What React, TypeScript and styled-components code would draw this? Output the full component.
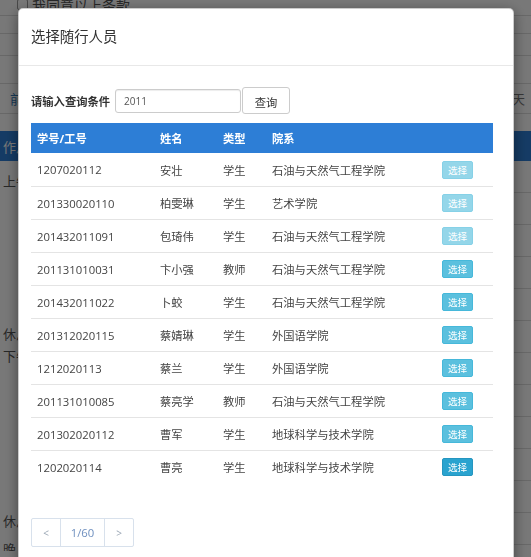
import React from 'react';
import styled, { createGlobalStyle, css } from 'styled-components';

const GlobalStyle = createGlobalStyle`
  html, body {
    margin: 0;
    padding: 0;
    background: #fff;
    overflow: hidden;
  }
  body {
    font-family: "Open Sans", "Noto Sans CJK SC", sans-serif;
    color: #333;
  }
`;

type Person = {
  id: string;
  name: string;
  kind: string;
  dept: string;
  state: 'faded' | 'normal' | 'active';
};

const people: Person[] = [
  { id: '1207020112', name: '安壮', kind: '学生', dept: '石油与天然气工程学院', state: 'faded' },
  { id: '201330020110', name: '柏雯琳', kind: '学生', dept: '艺术学院', state: 'faded' },
  { id: '201432011091', name: '包琦伟', kind: '学生', dept: '石油与天然气工程学院', state: 'faded' },
  { id: '201131010031', name: '卞小强', kind: '教师', dept: '石油与天然气工程学院', state: 'normal' },
  { id: '201432011022', name: '卜蛟', kind: '学生', dept: '石油与天然气工程学院', state: 'normal' },
  { id: '201312020115', name: '蔡婧琳', kind: '学生', dept: '外国语学院', state: 'normal' },
  { id: '1212020113', name: '蔡兰', kind: '学生', dept: '外国语学院', state: 'normal' },
  { id: '201131010085', name: '蔡亮学', kind: '教师', dept: '石油与天然气工程学院', state: 'normal' },
  { id: '201302020112', name: '曹军', kind: '学生', dept: '地球科学与技术学院', state: 'normal' },
  { id: '1202020114', name: '曹亮', kind: '学生', dept: '地球科学与技术学院', state: 'active' },
];

// left column of the schedule behind the dialog (rowspan blocks)
const periods = [
  { label: '上午', h: 160, pt: 11 },
  { label: '休息', h: 18, pt: 4 },
  { label: '下午', h: 164, pt: 8 },
  { label: '休息', h: 28, pt: 9 },
  { label: '晚上', h: 60, pt: 9 },
];

/* ---------- page behind the dialog ---------- */

const Page = styled.div`
  width: 531px;
  height: 557px;
  font-size: 14px;
  color: #555;
`;

const AgreeRow = styled.div`
  height: 21px;
  margin-top: -6px;
  display: flex;
  align-items: center;
  gap: 4px;
  padding-left: 17px;
  border-bottom: 1px solid #ddd;
  font-size: 14px;
`;

const Box = styled.span`
  width: 9px;
  height: 9px;
  border: 1px solid #999;
  border-radius: 2px;
`;

const FormLine = styled.div<{ $h: number }>`
  height: ${(p) => p.$h}px;
  border-bottom: 1px solid #ddd;
`;

const DayNav = styled.div`
  height: 29px;
  margin-bottom: 17px;
  display: flex;
  align-items: center;
  justify-content: space-between;
  padding: 0 6px 0 10px;
  border-bottom: 1px solid #ddd;
  font-size: 13px;
`;

const DayLink = styled.span<{ $muted?: boolean }>`
  color: ${(p) => (p.$muted ? '#777' : '#337ab7')};
`;

const Schedule = styled.div`
  display: grid;
  grid-template-columns: 60px 1fr;
`;

const ScheduleHead = styled.div`
  grid-column: 1 / 3;
  height: 30px;
  background: #2d7ed6;
  color: #fff;
  display: flex;
  align-items: center;
  padding-left: 3px;
  font-size: 13px;
`;

const PeriodCol = styled.div`
  display: flex;
  flex-direction: column;
`;

const Period = styled.div<{ $h: number; $pt: number }>`
  height: ${(p) => p.$h}px;
  padding: ${(p) => p.$pt}px 0 0 3px;
  box-sizing: border-box;
  line-height: 18px;
  font-size: 13px;
`;

const SlotCol = styled.div`
  display: flex;
  flex-direction: column;
`;

const Slot = styled.div`
  height: 31px;
  border-bottom: 1px solid #ddd;
`;

/* ---------- overlay + dialog ---------- */

const Backdrop = styled.div`
  position: fixed;
  inset: 0;
  background: rgba(0, 0, 0, 0.53);
`;

const Dialog = styled.div`
  margin: 8px 0 0 18px;
  width: 496px;
  height: 600px;
  background: #fff;
  border: 1px solid rgba(0, 0, 0, 0.2);
  border-radius: 5px;
  box-shadow: 0 4px 14px rgba(0, 0, 0, 0.45);
  box-sizing: border-box;
`;

const DialogHeader = styled.div`
  padding: 17px 13px 18px 12px;
  border-bottom: 1px solid #e8e8e8;
`;

const Title = styled.div`
  font-size: 14.4px;
  line-height: 21px;
  color: #333;
`;

const DialogBody = styled.div`
  padding: 21px 21px 0 12px;
`;

const SearchRow = styled.div`
  display: flex;
  align-items: center;
  height: 27px;
  margin-bottom: 9px;
`;

const SearchLabel = styled.label`
  font-size: 11.3px;
  font-weight: bold;
  color: #333;
  margin-right: 5px;
`;

const SearchInput = styled.div`
  width: 126px;
  height: 24px;
  box-sizing: border-box;
  border: 1px solid #ccc;
  border-radius: 3px;
  padding-left: 8px;
  display: flex;
  align-items: center;
  font-size: 10px;
  color: #555;
  box-shadow: inset 0 1px 1px rgba(0, 0, 0, 0.075);
`;

const SearchButton = styled.button`
  margin-left: 1px;
  width: 48px;
  height: 27px;
  box-sizing: border-box;
  border: 1px solid #ccc;
  border-radius: 3px;
  background: #fff;
  color: #333;
  font-family: inherit;
  font-size: 11.3px;
  padding: 2px 0 0;
`;

const Table = styled.div`
  width: 462px;
  display: grid;
  grid-template-columns: 123px 63px 49px 170px 57px;
  font-size: 11.3px;
`;

const HeadCell = styled.div`
  height: 30px;
  background: #2d7ed6;
  color: #fff;
  font-weight: bold;
  display: flex;
  align-items: center;
  padding-left: 6px;
`;

const Cell = styled.div<{ $first?: boolean }>`
  height: 33px;
  box-sizing: border-box;
  border-top: ${(p) => (p.$first ? 'none' : '1px solid #e4e4e4')};
  display: flex;
  align-items: center;
  padding-left: 6px;
  color: #444;
  white-space: nowrap;
`;

const PickButton = styled.button<{ $state: Person['state'] }>`
  height: 18px;
  padding: 0 5px;
  border-radius: 2px;
  font-family: inherit;
  font-size: 9.6px;
  color: #fff;
  border: 1px solid #46b8da;
  background: #5bc0de;
  ${(p) =>
    p.$state === 'faded' &&
    css`
      opacity: 0.65;
    `}
  ${(p) =>
    p.$state === 'active' &&
    css`
      background: #2aa3cf;
      border-color: #2596c0;
    `}
`;

const Pager = styled.div`
  display: flex;
  margin-top: 35px;
`;

const PageItem = styled.span<{ $wide?: boolean }>`
  height: 29px;
  box-sizing: border-box;
  width: ${(p) => (p.$wide ? '45px' : '30px')};
  border: 1px solid #d8e1ec;
  margin-left: -1px;
  display: flex;
  align-items: center;
  justify-content: center;
  font-size: ${(p) => (p.$wide ? '11.3px' : '10px')};
  color: ${(p) => (p.$wide ? '#6e8fbf' : '#9aa6b4')};
  &:first-child {
    margin-left: 0;
    border-radius: 2px 0 0 2px;
  }
  &:last-child {
    border-radius: 0 2px 2px 0;
  }
`;

export default function App() {
  return (
    <>
      <GlobalStyle />
      <Page>
        <AgreeRow>
          <Box />
          我同意以上条款
        </AgreeRow>
        <FormLine $h={17} />
        <FormLine $h={21} />
        <FormLine $h={27} />
        <DayNav>
          <DayLink>前一天</DayLink>
          <DayLink $muted>后一天</DayLink>
        </DayNav>
        <Schedule>
          <ScheduleHead>作息时间</ScheduleHead>
          <PeriodCol>
            {periods.map((p, i) => (
              <Period key={i} $h={p.h} $pt={p.pt}>
                {p.label}
              </Period>
            ))}
          </PeriodCol>
          <SlotCol>
            {Array.from({ length: 14 }).map((_, i) => (
              <Slot key={i} />
            ))}
          </SlotCol>
        </Schedule>
      </Page>

      <Backdrop>
        <Dialog>
          <DialogHeader>
            <Title>选择随行人员</Title>
          </DialogHeader>
          <DialogBody>
            <SearchRow>
              <SearchLabel>请输入查询条件</SearchLabel>
              <SearchInput>2011</SearchInput>
              <SearchButton type="button">查询</SearchButton>
            </SearchRow>
            <Table>
              <HeadCell>学号/工号</HeadCell>
              <HeadCell>姓名</HeadCell>
              <HeadCell>类型</HeadCell>
              <HeadCell>院系</HeadCell>
              <HeadCell />
              {people.map((p, i) => (
                <React.Fragment key={p.id}>
                  <Cell $first={i === 0}>{p.id}</Cell>
                  <Cell $first={i === 0}>{p.name}</Cell>
                  <Cell $first={i === 0}>{p.kind}</Cell>
                  <Cell $first={i === 0}>{p.dept}</Cell>
                  <Cell $first={i === 0}>
                    <PickButton type="button" $state={p.state}>
                      选择
                    </PickButton>
                  </Cell>
                </React.Fragment>
              ))}
            </Table>
            <Pager>
              <PageItem>&lt;</PageItem>
              <PageItem $wide>1/60</PageItem>
              <PageItem>&gt;</PageItem>
            </Pager>
          </DialogBody>
        </Dialog>
      </Backdrop>
    </>
  );
}
